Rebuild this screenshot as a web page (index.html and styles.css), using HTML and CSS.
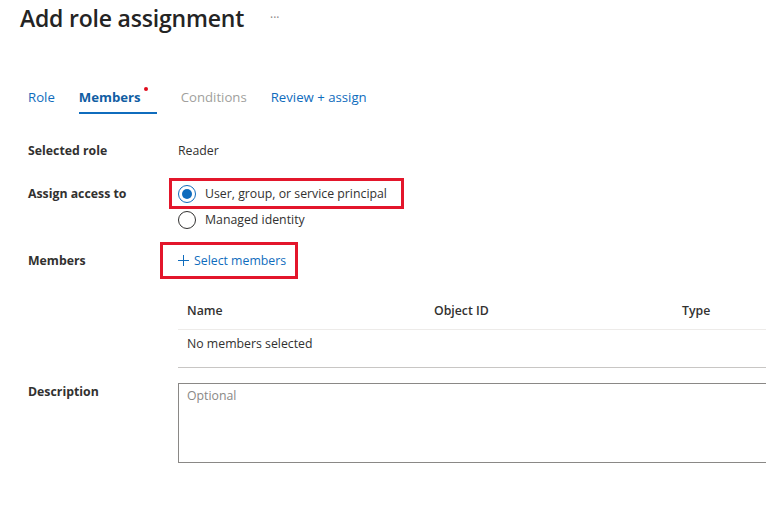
FILE: index.html
```html
<!DOCTYPE html>
<html lang="en">
<head>
<meta charset="utf-8">
<title>Add role assignment</title>
<link rel="stylesheet" href="styles.css">
</head>
<body>
<header class="title-bar">
  <h1 class="title">Add role assignment</h1>
  <span class="more">&middot;&middot;&middot;</span>
</header>

<nav class="tabs">
  <a class="tab">Role</a>
  <a class="tab tab-active">Members<span class="dot"></span></a>
  <a class="tab tab-disabled">Conditions</a>
  <a class="tab">Review + assign</a>
</nav>

<main class="form">
  <div class="row row-role">
    <div class="label">Selected role</div>
    <div class="value">Reader</div>
  </div>

  <div class="row row-access">
    <div class="label label-access">Assign access to</div>
    <div class="value radios">
      <label class="option option-marked">
        <span class="radio radio-checked"></span>
        <span>User, group, or service principal</span>
      </label>
      <label class="option">
        <span class="radio"></span>
        <span>Managed identity</span>
      </label>
    </div>
  </div>

  <div class="row row-members">
    <div class="label">Members</div>
    <div class="value">
      <a class="select-btn">
        <svg class="plus" width="11" height="11" viewBox="0 0 11 11"><path d="M5.5 0v11M0 5.5h11" stroke="#0f6cbd" stroke-width="1" fill="none"/></svg>
        <span>Select members</span>
      </a>
    </div>
  </div>

  <div class="row row-table">
    <div class="label"></div>
    <div class="value">
      <div class="table">
        <div class="thead">
          <div class="th">Name</div>
          <div class="th">Object ID</div>
          <div class="th">Type</div>
        </div>
        <div class="tbody">
          <div class="td">No members selected</div>
        </div>
      </div>
    </div>
  </div>

  <div class="row row-desc">
    <div class="label label-desc">Description</div>
    <div class="value">
      <textarea class="desc" placeholder="Optional"></textarea>
    </div>
  </div>
</main>
</body>
</html>
```

FILE: styles.css
```css
* { box-sizing: border-box; }

html, body {
  margin: 0;
  padding: 0;
  background: #ffffff;
  overflow: hidden;
}

body {
  font-family: "Open Sans", "Noto Sans", "Liberation Sans", sans-serif;
  font-size: 12.3px;
  color: #323130;
  width: 766px;
  height: 507px;
}

.title-bar {
  display: flex;
  align-items: center;
  height: 36px;
  padding-left: 20px;
}

.title {
  margin: 0;
  font-size: 23px;
  font-weight: 600;
  line-height: 36px;
  color: #242424;
  letter-spacing: -0.2px;
}

.more {
  margin-left: 26px;
  font-size: 12px;
  color: #8a8886;
  line-height: 36px;
}

.tabs {
  display: flex;
  gap: 24px;
  margin-top: 45px;
  padding-left: 28px;
}

.tab {
  position: relative;
  display: block;
  padding: 6px 0 5px;
  line-height: 20px;
  font-size: 13.2px;
  color: #0f6cbd;
  border-bottom: 2px solid transparent;
  cursor: pointer;
}

.tab-active {
  font-weight: 700;
  color: #115ea3;
  border-bottom-color: #0f6cbd;
  padding-right: 16px;
}

.tab-disabled {
  color: #a19f9d;
}

.dot {
  position: absolute;
  top: 6px;
  right: 9px;
  width: 4px;
  height: 4px;
  border-radius: 50%;
  background: #e00b1c;
}

.form {
  padding-left: 28px;
}

.row {
  display: grid;
  grid-template-columns: 150px 1fr;
  align-items: center;
}

.label {
  font-weight: 700;
  line-height: 20px;
}

.value {
  line-height: 20px;
}

.row-role {
  margin-top: 27px;
}

.row-access {
  margin-top: 17px;
  align-items: start;
}

.label-access {
  margin-top: 6px;
}

.radios {
  display: flex;
  flex-direction: column;
  align-items: flex-start;
}

.option {
  display: flex;
  align-items: center;
  gap: 9px;
  height: 22px;
}

.option-marked {
  height: 31px;
  margin-left: -9px;
  padding: 0 14px 0 6px;
  border: 3px solid #e3162b;
}

.radio {
  width: 18px;
  height: 18px;
  border: 1px solid #323130;
  border-radius: 50%;
  flex: none;
  display: flex;
  align-items: center;
  justify-content: center;
}

.radio-checked {
  border-color: #0f6cbd;
}

.radio-checked::after {
  content: "";
  width: 10px;
  height: 10px;
  border-radius: 50%;
  background: #0f6cbd;
}

.row-members {
  margin-top: 11px;
}

.select-btn {
  display: inline-flex;
  align-items: center;
  gap: 5px;
  height: 37px;
  margin-left: -18px;
  padding: 0 9px 0 15px;
  border: 3px solid #e3162b;
  color: #0f6cbd;
  cursor: pointer;
}

.plus {
  display: block;
}

.row-table {
  margin-top: 14px;
}

.table {
  width: 620px;
}

.thead {
  display: grid;
  grid-template-columns: 247px 248px 1fr;
  height: 37px;
  align-items: center;
  padding-left: 9px;
  border-bottom: 1px solid #edebe9;
}

.th {
  font-weight: 600;
  line-height: 20px;
}

.tbody {
  height: 38px;
  padding: 4px 0 0 9px;
  border-bottom: 1px solid #c8c6c4;
}

.row-desc {
  margin-top: 15px;
  align-items: start;
}

.label-desc {
  margin-top: -1px;
}

.desc {
  display: block;
  width: 640px;
  height: 80px;
  margin: 0;
  padding: 2px 8px;
  border: 1px solid #8a8886;
  border-radius: 0;
  font-family: "Open Sans", "Noto Sans", "Liberation Sans", sans-serif;
  font-size: 12.3px;
  line-height: 20px;
  color: #323130;
  resize: none;
  outline: none;
}

.desc::placeholder {
  color: #8a8886;
  opacity: 1;
}
```
